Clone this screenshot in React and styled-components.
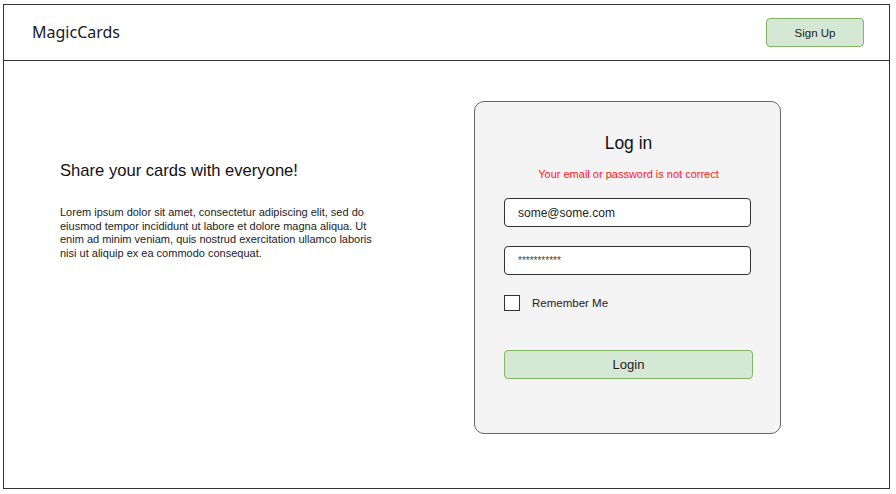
import React from "react";
import styled, { createGlobalStyle } from "styled-components";

const Global = createGlobalStyle`
  html, body { margin: 0; padding: 0; background: #ffffff; }
  body { font-family: "Liberation Sans", Arial, sans-serif; }
  * { box-sizing: border-box; }
`;

const Frame = styled.div`
  margin: 4px 0 0 3px;
  width: 887px;
  height: 485px;
  border: 1px solid #333333;
  display: flex;
  flex-direction: column;
  background: #ffffff;
`;

const Header = styled.header`
  height: 56px;
  border-bottom: 1px solid #333333;
  display: flex;
  align-items: center;
  justify-content: space-between;
  padding: 0 25px 0 28px;
`;

const Brand = styled.div`
  font-family: "Noto Sans", "Open Sans", sans-serif;
  font-size: 16px;
  color: #1a1a1a;
  margin-top: -1px;
`;

const GreenButton = styled.button`
  font-family: "Liberation Sans", Arial, sans-serif;
  background: #d5e8d4;
  border: 1px solid #82b366;
  border-radius: 4px;
  color: #222222;
  font-size: ${(p) => p.$size || 12}px;
  width: ${(p) => p.$w}px;
  height: ${(p) => p.$h}px;
  padding: 0;
  cursor: pointer;
`;

const Main = styled.main`
  flex: 1;
  display: flex;
  padding: 40px 0 0 56px;
`;

const Intro = styled.section`
  width: 414px;
  padding-top: 59px;
`;

const Headline = styled.h1`
  margin: 0;
  font-weight: normal;
  font-size: 16.6px;
  color: #111111;
  line-height: 22px;
`;

const Body = styled.p`
  margin: 24px 0 0 0;
  width: 330px;
  font-size: 11px;
  line-height: 13.5px;
  color: #222222;
`;

const Card = styled.section`
  width: 307px;
  height: 333px;
  background: #f4f4f4;
  border: 1px solid #666666;
  border-radius: 10px;
  display: flex;
  flex-direction: column;
  padding: 30px 27px 0 29px;
`;

const Title = styled.h2`
  margin: 0;
  font-weight: normal;
  font-size: 17.5px;
  line-height: 22px;
  text-align: center;
  color: #111111;
`;

const Error = styled.div`
  margin-top: 13px;
  text-align: center;
  font-size: 11px;
  color: #ff1a1a;
  line-height: 14px;
`;

const Field = styled.div`
  margin-top: ${(p) => p.$mt}px;
  width: 247px;
  height: 29px;
  background: #ffffff;
  border: 1px solid #333333;
  border-radius: 4px;
  display: flex;
  align-items: center;
  padding-left: 13px;
  font-size: ${(p) => p.$size || 12}px;
  color: ${(p) => p.$color || "#222222"};
  letter-spacing: ${(p) => p.$ls || 0}px;
`;

const CheckRow = styled.label`
  margin-top: 20px;
  display: flex;
  align-items: center;
  gap: 12px;
  font-size: 11.5px;
  color: #222222;
`;

const Box = styled.span`
  width: 16px;
  height: 16px;
  border: 1px solid #333333;
  background: #ffffff;
  display: inline-block;
`;

const LoginWrap = styled.div`
  margin-top: 39px;
`;

export default function App() {
  return (
    <>
      <Global />
      <Frame>
        <Header>
          <Brand>MagicCards</Brand>
          <GreenButton $w={98} $h={29} $size={11.5}>Sign Up</GreenButton>
        </Header>
        <Main>
          <Intro>
            <Headline>Share your cards with everyone!</Headline>
            <Body>
              Lorem ipsum dolor sit amet, consectetur adipiscing elit, sed do
              eiusmod tempor incididunt ut labore et dolore magna aliqua. Ut
              enim ad minim veniam, quis nostrud exercitation ullamco laboris
              nisi ut aliquip ex ea commodo consequat.
            </Body>
          </Intro>
          <Card>
            <Title>Log in</Title>
            <Error>Your email or password is not correct</Error>
            <Field $mt={17}>some@some.com</Field>
            <Field $mt={19} $size={10} $color="#444444">***********</Field>
            <CheckRow>
              <Box />
              Remember Me
            </CheckRow>
            <LoginWrap>
              <GreenButton $w={249} $h={29} $size={13}>Login</GreenButton>
            </LoginWrap>
          </Card>
        </Main>
      </Frame>
    </>
  );
}
